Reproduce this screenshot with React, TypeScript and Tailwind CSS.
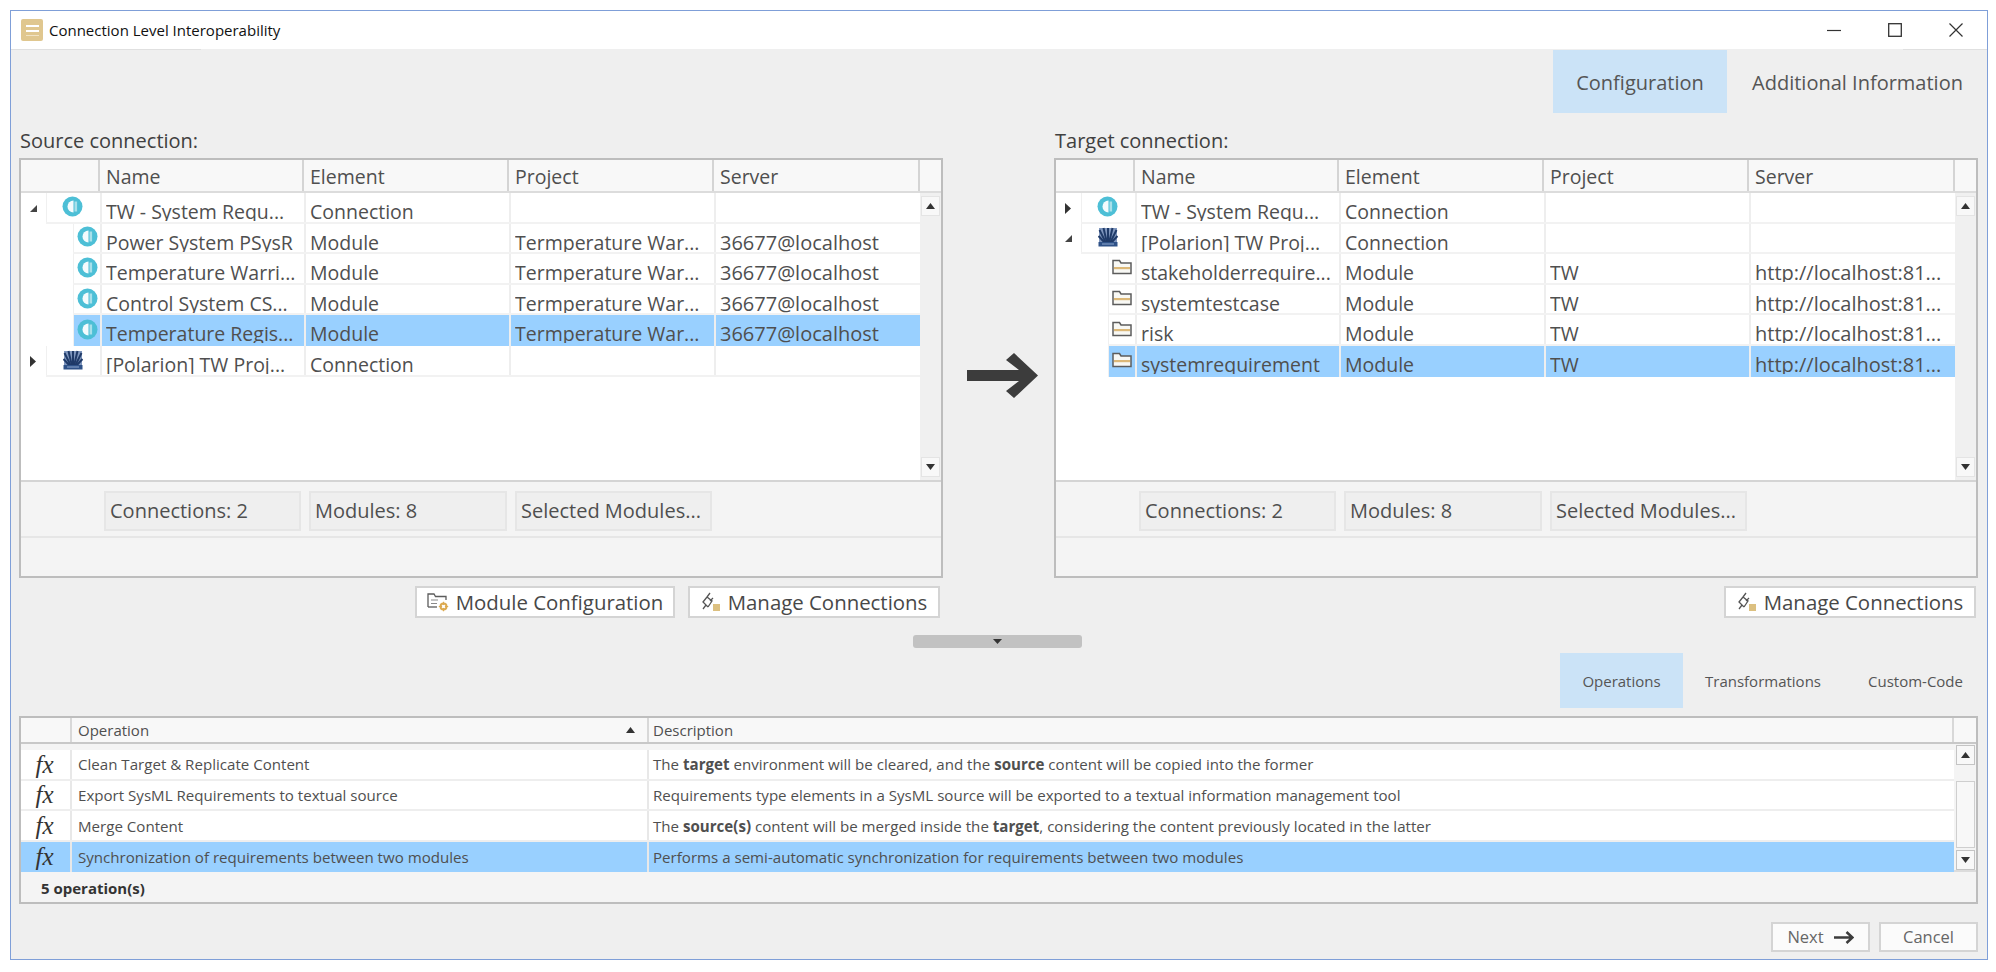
import * as React from "react";

const FONT = "font-['Open_Sans','Noto_Sans',sans-serif]";

function DoorIcon() {
  return (
    <svg width="21" height="21" viewBox="0 0 21 21" className="shrink-0">
      <circle cx="10.5" cy="10.5" r="10" fill="#4dbfd6" />
      <path d="M11.5 4.5 A6 6 0 0 0 11.5 16.5 Z" fill="#f4fbfd" />
      <rect x="12.5" y="5.5" width="2.6" height="10" fill="#a8e0ea" />
    </svg>
  );
}

function PolarionIcon() {
  return (
    <svg width="20" height="20" viewBox="0 0 20 20" className="shrink-0">
      <rect x="1" y="1" width="18" height="18" fill="#7f96bd" />
      <g stroke="#1f3a68" strokeWidth="2" fill="none">
        <path d="M10 16 L10 1" />
        <path d="M9 16 L5.5 1" />
        <path d="M11 16 L14.5 1" />
        <path d="M8 16 L1.5 3" />
        <path d="M12 16 L18.5 3" />
        <path d="M7 16 L0.5 9" />
        <path d="M13 16 L19.5 9" />
      </g>
      <rect x="0.5" y="15" width="19" height="4.5" fill="#2f5288" />
      <path d="M4 17 H16" stroke="#8fa8cf" strokeWidth="1" />
    </svg>
  );
}

function FolderIcon() {
  return (
    <svg width="20" height="16" viewBox="0 0 20 16" className="shrink-0">
      <path d="M1 14.5 V1.5 H7.5 L9 4 H19 V14.5 Z" fill="#f8f8f4" stroke="#5c5c5c" strokeWidth="1.5" />
      <rect x="2" y="8" width="16" height="2.2" fill="#dcb878" />
    </svg>
  );
}

function ManageIcon() {
  return (
    <svg width="20" height="20" viewBox="0 0 20 20" className="shrink-0">
      <g stroke="#555" strokeWidth="1.3" fill="none">
        <path d="M9 1 L6 5 L2 10 L7 15" />
        <path d="M6 5 L11 9 L7 15" />
        <path d="M2 17 L5 13" />
        <path d="M9 9 L12 6" />
      </g>
      <rect x="12" y="12" width="7" height="7" fill="#dcc080" />
    </svg>
  );
}

function ModuleConfigIcon() {
  return (
    <svg width="22" height="20" viewBox="0 0 22 20" className="shrink-0">
      <path d="M1 15 V2 H7 L8.5 4.5 H19 V8" fill="none" stroke="#5c5c5c" strokeWidth="1.3" />
      <path d="M1 15 H10" stroke="#5c5c5c" strokeWidth="1.3" />
      <path d="M4 8 H11 M4 11.5 H10" stroke="#8a8a8a" strokeWidth="1.2" />
      <circle cx="16.5" cy="14.5" r="3" fill="none" stroke="#dcaa50" strokeWidth="2" />
      <path d="M16.5 9.8 V19.2 M11.8 14.5 H21.2" stroke="#dcaa50" strokeWidth="1.2" />
      <circle cx="16.5" cy="14.5" r="1.4" fill="#fff" />
    </svg>
  );
}

function BigArrow() {
  return (
    <svg width="71" height="45" viewBox="0 0 71 45">
      <path d="M0 17 H52 L39 7 L47 0 L71 22.5 L47 45 L39 38 L52 28 H0 Z" fill="#3c3c3c" />
    </svg>
  );
}

function SmallArrow() {
  return (
    <svg width="20" height="13" viewBox="0 0 20 13">
      <path d="M0 6.5 H18 M12.5 1 L18.5 6.5 L12.5 12" fill="none" stroke="#3c3c3c" strokeWidth="2.5" />
    </svg>
  );
}

function ScrollBtn({ up, strong }: { up?: boolean; strong?: boolean }) {
  return (
    <div
      className={`flex h-[20px] w-[19px] items-center justify-center bg-[#f8f8f8] border ${
        strong ? "border-[#c4c4c4]" : "border-[#e4e4e4]"
      }`}
    >
      <svg width="9" height="6" viewBox="0 0 9 6">
        <path d={up ? "M0 6 L4.5 0 L9 6 Z" : "M0 0 L4.5 6 L9 0 Z"} fill="#333" />
      </svg>
    </div>
  );
}

type TreeRow = {
  level: 0 | 1;
  open?: boolean;
  icon: "door" | "polarion" | "folder";
  name: string;
  element: string;
  project: string;
  server: string;
  selected?: boolean;
};

const SOURCE_ROWS: TreeRow[] = [
  { level: 0, open: true, icon: "door", name: "TW - System Requ...", element: "Connection", project: "", server: "" },
  { level: 1, icon: "door", name: "Power System PSysR", element: "Module", project: "Termperature War...", server: "36677@localhost" },
  { level: 1, icon: "door", name: "Temperature Warri...", element: "Module", project: "Termperature War...", server: "36677@localhost" },
  { level: 1, icon: "door", name: "Control System CS...", element: "Module", project: "Termperature War...", server: "36677@localhost" },
  { level: 1, icon: "door", name: "Temperature Regis...", element: "Module", project: "Termperature War...", server: "36677@localhost", selected: true },
  { level: 0, icon: "polarion", name: "[Polarion] TW Proj...", element: "Connection", project: "", server: "" },
];

const TARGET_ROWS: TreeRow[] = [
  { level: 0, icon: "door", name: "TW - System Requ...", element: "Connection", project: "", server: "" },
  { level: 0, open: true, icon: "polarion", name: "[Polarion] TW Proj...", element: "Connection", project: "", server: "" },
  { level: 1, icon: "folder", name: "stakeholderrequire...", element: "Module", project: "TW", server: "http://localhost:81..." },
  { level: 1, icon: "folder", name: "systemtestcase", element: "Module", project: "TW", server: "http://localhost:81..." },
  { level: 1, icon: "folder", name: "risk", element: "Module", project: "TW", server: "http://localhost:81..." },
  { level: 1, icon: "folder", name: "systemrequirement", element: "Module", project: "TW", server: "http://localhost:81...", selected: true },
];

function Cell({ width, text, size = "text-[19.5px]" }: { width: string; text: string; size?: string }) {
  return (
    <div className={`${width} h-full shrink-0 overflow-hidden border-l-2 border-[#eeeeee] pl-[4px]`}>
      <div className="h-[28px] overflow-hidden">
        <div className={`pt-[5px] ${size} leading-[28px] whitespace-nowrap text-[#4f4f4f]`}>{text}</div>
      </div>
    </div>
  );
}

function RowIcon({ icon }: { icon: TreeRow["icon"] }) {
  if (icon === "door") return <DoorIcon />;
  if (icon === "polarion") return <PolarionIcon />;
  return <FolderIcon />;
}

function Row({ row }: { row: TreeRow }) {
  const bg = row.selected ? "bg-[#99d0ff]" : "";
  return (
    <div className="flex h-[30.6px]">
      {row.level === 0 ? (
        <div className="flex w-[25px] shrink-0 items-center justify-center pr-[2px]">
          <svg width="8" height="11" viewBox="0 0 8 11">
            {row.open ? <path d="M8 2 V9 H1 Z" fill="#444" /> : <path d="M1 0 L7 5.5 L1 11 Z" fill="#333" />}
          </svg>
        </div>
      ) : (
        <div className="w-[52px] shrink-0" />
      )}
      <div className={`flex min-w-0 flex-1 ${bg} ${row.selected ? "" : "border-b-2 border-[#f2f2f2]"}`}>
        <div
          className={`flex shrink-0 items-center border-l border-[#f0f0f0] ${
            row.level === 0 ? "w-[54px] justify-center pr-[2px] pb-[1px]" : "w-[27px] justify-center pb-[2px]"
          }`}
        >
          <RowIcon icon={row.icon} />
        </div>
        <Cell width="w-[204px]" text={row.name} />
        <Cell width="w-[205px]" text={row.element} />
        <Cell width="w-[205px]" text={row.project} />
        <Cell width="w-[206px]" text={row.server} size="text-[20px]" />
      </div>
    </div>
  );
}

function HeaderCell({ width, text }: { width: string; text: string }) {
  return (
    <div className={`${width} flex h-full shrink-0 items-center border-r-2 border-[#d4d4d4] pt-[2px] pl-[6px] text-[19.5px] text-[#4f4f4f]`}>
      {text}
    </div>
  );
}

function StatusBox({ width, text }: { width: string; text: string }) {
  return (
    <div className={`${width} flex h-[40px] items-center border-2 border-[#e6e6e6] bg-[#efefef] pl-[4px] text-[20px] whitespace-nowrap text-[#4f4f4f]`}>
      {text}
    </div>
  );
}

function ConnectionPanel({ label, rows }: { label: string; rows: TreeRow[] }) {
  return (
    <div className="w-[924px]">
      <div className="flex h-[28px] items-center pl-[1px] text-[20px] text-[#404040]">{label}</div>
      <div className="mt-[3px] h-[420px] border-2 border-[#bdbdbd] bg-[#f4f4f4]">
        <div className="flex h-[33px] border-b-2 border-[#dcdcdc] bg-[#f8f8f8]">
          <HeaderCell width="w-[79px]" text="" />
          <HeaderCell width="w-[204px]" text="Name" />
          <HeaderCell width="w-[205px]" text="Element" />
          <HeaderCell width="w-[205px]" text="Project" />
          <HeaderCell width="w-[206px]" text="Server" />
        </div>
        <div className="flex h-[289px] border-b-2 border-[#d4d4d4] bg-white">
          <div className="w-[899px] shrink-0">
            {rows.map((r, i) => (
              <Row key={i} row={r} />
            ))}
          </div>
          <div className="flex flex-1 flex-col items-center justify-between bg-[#f0f0f0] py-[3px]">
            <ScrollBtn up />
            <ScrollBtn />
          </div>
        </div>
        <div className="flex h-[56px] items-center gap-[8px] border-b-2 border-[#e6e6e6] pt-[4px] pl-[83px]">
          <StatusBox width="w-[197px]" text="Connections: 2" />
          <StatusBox width="w-[198px]" text="Modules: 8" />
          <StatusBox width="w-[197px]" text="Selected Modules..." />
        </div>
      </div>
    </div>
  );
}

function ToolButton({ icon, text, width }: { icon: React.ReactNode; text: string; width: string }) {
  return (
    <div className={`${width} flex h-[32px] items-center justify-center gap-[7px] border-2 border-[#d4d4d4] bg-white text-[20.4px] whitespace-nowrap text-[#484848]`}>
      {icon}
      {text}
    </div>
  );
}

const OPS: { name: string; desc: React.ReactNode; selected?: boolean }[] = [
  {
    name: "Clean Target & Replicate Content",
    desc: (
      <>
        The <b>target</b> environment will be cleared, and the <b>source</b> content will be copied into the former
      </>
    ),
  },
  {
    name: "Export SysML Requirements to textual source",
    desc: "Requirements type elements in a SysML source will be exported to a textual information management tool",
  },
  {
    name: "Merge Content",
    desc: (
      <>
        The <b>source(s)</b> content will be merged inside the <b>target</b>, considering the content previously located in the latter
      </>
    ),
  },
  {
    name: "Synchronization of requirements between two modules",
    desc: "Performs a semi-automatic synchronization for requirements between two modules",
    selected: true,
  },
];

function OperationsTable() {
  return (
    <div className="h-[188px] border-2 border-[#bdbdbd] bg-[#f4f4f4]">
      <div className="flex h-[26px] border-b-2 border-[#c8c8c8] bg-[#f8f8f8] text-[15px] text-[#4f4f4f]">
        <div className="w-[51px] shrink-0 border-r-2 border-[#d8d8d8]" />
        <div className="flex w-[577px] shrink-0 items-center justify-between border-r-2 border-[#d8d8d8] pr-[12px] pl-[6px]">
          Operation
          <svg width="9" height="6" viewBox="0 0 9 6">
            <path d="M0 6 L4.5 0 L9 6 Z" fill="#333" />
          </svg>
        </div>
        <div className="flex w-[1305px] shrink-0 items-center border-r-2 border-[#d8d8d8] pl-[4px]">Description</div>
      </div>
      <div className="flex h-[128px] border-b-2 border-[#dcdcdc]">
        <div className="w-[1933px] shrink-0 pt-[6px]">
          {OPS.map((op) => (
            <div
              key={op.name}
              className={`flex h-[30.6px] text-[15.1px] whitespace-nowrap text-[#4f4f4f] ${
                op.selected ? "bg-[#99d0ff]" : "border-b-2 border-[#eeeeee] bg-white"
              }`}
            >
              <div className="flex w-[51px] shrink-0 items-center justify-center border-r-2 border-[#e8e8e8] pr-[2px] font-['Liberation_Serif',serif] text-[25px] text-[#333] italic">
                fx
              </div>
              <div className="flex w-[577px] shrink-0 items-center border-r-2 border-[#e8e8e8] pt-[1px] pl-[6px]">{op.name}</div>
              <div className="flex flex-1 items-center pt-[1px] pl-[4px]">
                <span>{op.desc}</span>
              </div>
            </div>
          ))}
        </div>
        <div className="flex flex-1 flex-col items-center pt-[1px]">
          <ScrollBtn up strong />
          <div className="mt-[16px] h-[67px] w-[19px] border border-[#cfcfcf] bg-[#f8f8f8]" />
          <div className="mt-[2px]">
            <ScrollBtn strong />
          </div>
        </div>
      </div>
      <div className="flex h-[30px] items-center pt-[3px] pl-[20px] text-[15px] font-bold text-[#333]">5 operation(s)</div>
    </div>
  );
}

export default function App() {
  return (
    <div className={`h-[972px] w-[1996px] bg-white pt-[10px] pl-[10px] ${FONT}`}>
      <div className="flex h-[950px] w-[1978px] flex-col border border-[#7f9fd8] bg-[#efefef]">
        {/* title bar */}
        <div className="flex h-[38px] shrink-0 items-center bg-white pl-[10px]">
          <div className="flex h-[22px] w-[22px] flex-col items-center justify-center gap-[3px] rounded-[2px] bg-[#e0c78f]">
            <div className="h-[2px] w-[13px] bg-white" />
            <div className="h-[2px] w-[13px] bg-white" />
            <div className="h-[1px] w-[13px] bg-[#f1e3c4]" />
          </div>
          <div className="ml-[6px] text-[15px] text-[#111]">Connection Level Interoperability</div>
          <div className="ml-auto flex items-center gap-[47px] pr-[24px]">
            <svg width="14" height="14" viewBox="0 0 14 14">
              <path d="M0 7.5 H14" stroke="#333" strokeWidth="1.2" />
            </svg>
            <svg width="14" height="14" viewBox="0 0 14 14">
              <rect x="0.7" y="0.7" width="12.6" height="12.6" fill="none" stroke="#333" strokeWidth="1.3" />
            </svg>
            <svg width="14" height="14" viewBox="0 0 14 14">
              <path d="M0.5 0.5 L13.5 13.5 M13.5 0.5 L0.5 13.5" stroke="#333" strokeWidth="1.2" />
            </svg>
          </div>
        </div>
        <div className="flex h-[1px] shrink-0 justify-between">
          <div className="w-[190px] bg-[#e0e0e0]" />
          <div className="w-[84px] bg-[#e0e0e0]" />
        </div>

        <div className="flex flex-1 flex-col pr-[9px] pl-[8px]">
          {/* top tabs */}
          <div className="flex h-[63px] shrink-0 justify-end text-[20px] text-[#555]">
            <div className="flex w-[174px] items-center justify-center bg-[#cbe3f7] pt-[2px]">Configuration</div>
            <div className="flex w-[251px] items-center justify-center pt-[2px] pl-[10px] whitespace-nowrap">Additional Information</div>
          </div>

          {/* connections */}
          <div className="mt-[14px] flex items-start">
            <ConnectionPanel label="Source connection:" rows={SOURCE_ROWS} />
            <div className="flex h-[451px] w-[111px] shrink-0 items-center justify-center pt-[45px] pl-[8px]">
              <BigArrow />
            </div>
            <ConnectionPanel label="Target connection:" rows={TARGET_ROWS} />
          </div>

          {/* action buttons */}
          <div className="mt-[8px] flex">
            <div className="flex w-[924px] justify-end gap-[13px] pr-[3px]">
              <ToolButton width="w-[260px]" icon={<ModuleConfigIcon />} text="Module Configuration" />
              <ToolButton width="w-[252px]" icon={<ManageIcon />} text="Manage Connections" />
            </div>
            <div className="flex w-[1035px] justify-end pr-[2px]">
              <ToolButton width="w-[252px]" icon={<ManageIcon />} text="Manage Connections" />
            </div>
          </div>

          {/* splitter */}
          <div className="mt-[17px] ml-[894px] flex h-[13px] w-[169px] items-center justify-center rounded-[3px] bg-[#c2c2c2]">
            <svg width="9" height="5" viewBox="0 0 9 5">
              <path d="M0 0 L4.5 5 L9 0 Z" fill="#333" />
            </svg>
          </div>

          {/* operation tabs */}
          <div className="mt-[5px] flex h-[55px] shrink-0 justify-end text-[15px] text-[#555]">
            <div className="flex w-[123px] items-center justify-center bg-[#cbe3f7] pt-[2px]">Operations</div>
            <div className="flex w-[160px] items-center justify-center pt-[2px]">Transformations</div>
            <div className="flex w-[135px] items-center justify-center pt-[2px] pl-[10px]">Custom-Code</div>
          </div>

          <div className="mt-[8px]">
            <OperationsTable />
          </div>

          {/* next / cancel */}
          <div className="mt-[18px] flex justify-end gap-[9px] text-[16.5px] text-[#666]">
            <div className="flex h-[30px] w-[99px] items-center justify-center gap-[10px] border-2 border-[#d4d4d4] bg-[#fbfbfb]">
              Next
              <SmallArrow />
            </div>
            <div className="flex h-[30px] w-[99px] items-center justify-center border-2 border-[#d4d4d4] bg-[#fbfbfb]">
              Cancel
            </div>
          </div>
        </div>
      </div>
    </div>
  );
}
